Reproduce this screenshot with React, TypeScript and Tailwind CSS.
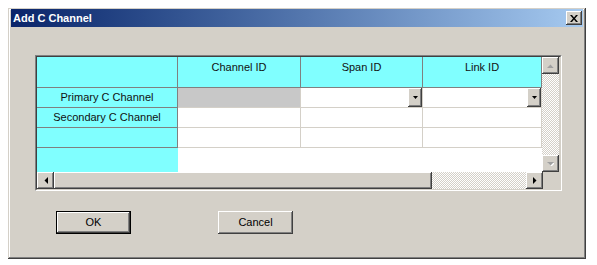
const RAISED =
  "bg-[#d4d0c8] shadow-[inset_-1px_-1px_#404040,inset_1px_1px_#ffffff,inset_-2px_-2px_#808080,inset_2px_2px_#d4d0c8]";
const DITHER =
  "bg-[repeating-conic-gradient(#d4d0c8_0%_25%,#ffffff_0%_50%)] bg-[length:2px_2px]";

const COLUMNS = [
  { label: "Channel ID", width: "w-[123px]" },
  { label: "Span ID", width: "w-[122px]" },
  { label: "Link ID", width: "w-[119px]" },
];

type Dir = "up" | "down" | "left" | "right";

function Arrow({ dir, disabled }: { dir: Dir; disabled?: boolean }) {
  const points: Record<Dir, string> = {
    up: "0,4 7,4 3.5,0.5",
    down: "0,0 7,0 3.5,3.5",
    left: "4,0 4,7 0.5,3.5",
    right: "0,0 0,7 3.5,3.5",
  };
  const vertical = dir === "up" || dir === "down";
  return (
    <svg width={vertical ? 7 : 4} height={vertical ? 4 : 7} viewBox={vertical ? "0 0 7 4" : "0 0 4 7"}>
      {disabled ? <polygon points={points[dir]} fill="#ffffff" transform="translate(1,1)" /> : null}
      <polygon points={points[dir]} fill={disabled ? "#a0a0a0" : "#000000"} />
    </svg>
  );
}

function ScrollButton({ dir, disabled }: { dir: Dir; disabled?: boolean }) {
  return (
    <div className={`flex h-[17px] w-[17px] shrink-0 items-center justify-center ${RAISED}`}>
      <Arrow dir={dir} disabled={disabled} />
    </div>
  );
}

function DropButton() {
  return (
    <div className={`ml-auto flex h-full w-[14px] items-center justify-center ${RAISED}`}>
      <svg width="5" height="3" viewBox="0 0 5 3">
        <polygon points="0,0 5,0 2.5,3" fill="#000000" />
      </svg>
    </div>
  );
}

function RowHeader({ label }: { label?: string }) {
  return (
    <div className="flex h-[20px] w-[141px] shrink-0 items-center justify-center border-r border-b border-[#808080] bg-[#80ffff] text-[11px] text-[#111]">
      {label}
    </div>
  );
}

function DataRow({ label, primary }: { label?: string; primary?: boolean }) {
  return (
    <div className="flex">
      <RowHeader label={label} />
      <div
        className={`h-[20px] w-[123px] border-r border-b border-[#d4d0c8] ${primary ? "bg-[#c8c8c8]" : "bg-white"}`}
      />
      <div className="flex h-[20px] w-[122px] border-r border-b border-[#d4d0c8] bg-white">
        {primary ? <DropButton /> : null}
      </div>
      <div className="flex h-[20px] w-[119px] border-r border-b border-[#d4d0c8] bg-white">
        {primary ? <DropButton /> : null}
      </div>
    </div>
  );
}

function ChannelGrid() {
  return (
    <div className="border-t border-l border-[#808080] border-r-white border-b-white border-r border-b">
      <div className="border-t border-l border-[#404040] border-r border-b border-r-[#d4d0c8] border-b-[#d4d0c8]">
        <div className="flex">
          <div className="flex w-[505px] flex-col">
            <div className="flex h-[31px]">
              <div className="w-[141px] border-r border-b border-[#808080] bg-[#80ffff]" />
              {COLUMNS.map((col) => (
                <div
                  key={col.label}
                  className={`${col.width} border-r border-b border-[#808080] bg-[#80ffff] pt-[2px] text-center text-[11px] text-[#111]`}
                >
                  {col.label}
                </div>
              ))}
            </div>
            <DataRow label="Primary C Channel" primary />
            <DataRow label="Secondary C Channel" />
            <DataRow />
            <div className="flex h-[24px]">
              <div className="w-[141px] bg-[#80ffff]" />
              <div className="flex-1 bg-white" />
            </div>
          </div>
          <div className="flex w-[17px] flex-col">
            <ScrollButton dir="up" disabled />
            <div className={`flex-1 ${DITHER}`} />
            <ScrollButton dir="down" disabled />
          </div>
        </div>
        <div className="flex h-[17px]">
          <ScrollButton dir="left" />
          <div className={`w-[378px] ${RAISED}`} />
          <div className={`flex-1 ${DITHER}`} />
          <ScrollButton dir="right" />
          <div className="w-[17px] bg-[#d4d0c8]" />
        </div>
      </div>
    </div>
  );
}

export default function App() {
  return (
    <div className="h-[265px] w-[597px] bg-white pt-[8px] pl-[8px] font-['Liberation_Sans',Arial,sans-serif]">
      <div className="flex h-[251px] w-[578px] flex-col bg-[#d4d0c8] px-[3px] pt-[1px] pb-[3px] shadow-[inset_-1px_-1px_#404040,inset_1px_1px_#d4d0c8,inset_-2px_-2px_#808080,inset_2px_2px_#ffffff]">
        <div className="flex h-[18px] items-center bg-gradient-to-r from-[#0a246a] to-[#a6caf0] pl-[2px] pr-[1px]">
          <span className="text-[11px] font-bold text-white">Add C Channel</span>
          <div className={`ml-auto flex h-[14px] w-[16px] items-center justify-center ${RAISED}`}>
            <svg width="8" height="7" viewBox="0 0 8 7">
              <path d="M0 0h2l2 2.5L6 0h2L5 3.5 8 7H6L4 4.5 2 7H0l3-3.5z" fill="#000000" />
            </svg>
          </div>
        </div>
        <div className="flex flex-1 flex-col pt-[28px] pl-[24px]">
          <div className="w-[527px]">
            <ChannelGrid />
          </div>
          <div className="mt-[20px] flex gap-[87px] pl-[21px]">
            <button className="h-[23px] w-[75px] border border-black bg-[#d4d0c8] text-[11px] text-black shadow-[inset_-1px_-1px_#404040,inset_1px_1px_#ffffff,inset_-2px_-2px_#808080]">
              OK
            </button>
            <button className={`h-[23px] w-[75px] text-[11px] text-black ${RAISED}`}>Cancel</button>
          </div>
        </div>
      </div>
    </div>
  );
}
